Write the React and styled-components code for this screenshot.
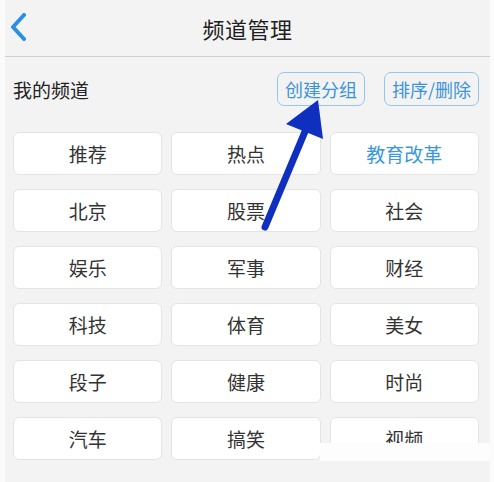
import { createGlobalStyle, styled } from "styled-components";

const GlobalStyle = createGlobalStyle`
  html, body {
    margin: 0;
    padding: 0;
    background: #fbfbfb;
  }
  body {
    font-family: "Noto Sans CJK SC", "Noto Sans", sans-serif;
  }
`;

const Page = styled.div`
  position: relative;
  width: 485px;
  height: 482px;
  margin-left: 5px;
  background: #f3f3f3;
  overflow: hidden;
`;

const Header = styled.header`
  position: relative;
  height: 56px;
  display: flex;
  align-items: center;
  justify-content: center;
  border-bottom: 1px solid #cfcfcf;
`;

const Title = styled.h1`
  margin: 0;
  font-size: 22px;
  font-weight: 400;
  color: #1e1e1e;
  letter-spacing: 0.5px;
`;

const BackButton = styled.button`
  position: absolute;
  left: 0;
  top: 11px;
  width: 26px;
  height: 32px;
  padding: 0;
  border: 0;
  background: none;
  display: flex;
  align-items: center;
  justify-content: center;
`;

const SectionBar = styled.div`
  display: flex;
  align-items: center;
  padding: 15px 11px 0 8px;
  height: 34px;
`;

const SectionTitle = styled.span`
  flex: 1;
  font-size: 19px;
  color: #222;
`;

const ActionButton = styled.button`
  height: 34px;
  box-sizing: border-box;
  padding: 0 ${(p) => p.$pad}px;
  margin-left: ${(p) => p.$gap}px;
  border: 1px solid #94c7ee;
  border-radius: 7px;
  background: transparent;
  color: #3d93d8;
  font-family: inherit;
  font-size: 18px;
  line-height: 1;
`;

const ChannelGrid = styled.ul`
  list-style: none;
  margin: 26px 0 0;
  padding: 0 11px 0 8px;
  display: grid;
  grid-template-columns: repeat(3, 1fr);
  grid-auto-rows: 43px;
  gap: 14px 9px;
`;

const Channel = styled.li`
  display: flex;
  align-items: center;
  justify-content: center;
  background: #fff;
  border: 1px solid #e4e4e4;
  border-radius: 6px;
  font-size: 19px;
  color: ${(p) => (p.$active ? "#3a98dd" : "#333")};
`;

const Mask = styled.div`
  position: absolute;
  left: 315px;
  right: 0;
  top: 443px;
  height: 18px;
  background: #fdfdfd;
`;

const Arrow = styled.svg`
  position: absolute;
  left: 0;
  top: 0;
  pointer-events: none;
`;

const channels = [
  "推荐",
  "热点",
  "教育改革",
  "北京",
  "股票",
  "社会",
  "娱乐",
  "军事",
  "财经",
  "科技",
  "体育",
  "美女",
  "段子",
  "健康",
  "时尚",
  "汽车",
  "搞笑",
  "视频",
];

export default function App() {
  return (
    <>
      <GlobalStyle />
      <Page>
        <Header>
          <BackButton aria-label="返回">
            <svg width="18" height="28" viewBox="0 0 18 28">
              <path
                d="M15 2 L4 14 L15 26"
                fill="none"
                stroke="#2a8fe2"
                strokeWidth="4"
                strokeLinecap="round"
                strokeLinejoin="round"
              />
            </svg>
          </BackButton>
          <Title>频道管理</Title>
        </Header>

        <SectionBar>
          <SectionTitle>我的频道</SectionTitle>
          <ActionButton $pad={7} $gap={0}>
            创建分组
          </ActionButton>
          <ActionButton $pad={7} $gap={19}>
            排序/删除
          </ActionButton>
        </SectionBar>

        <ChannelGrid>
          {channels.map((name) => (
            <Channel key={name} $active={name === "教育改革"}>
              {name}
            </Channel>
          ))}
        </ChannelGrid>

        <Mask />

        <Arrow width="485" height="482" viewBox="0 0 485 482">
          <line
            x1="260"
            y1="227"
            x2="304"
            y2="122"
            stroke="#0f2fbf"
            strokeWidth="7"
            strokeLinecap="round"
          />
          <polygon points="313,100 281,124 318,139" fill="#0f2fbf" />
        </Arrow>
      </Page>
    </>
  );
}
